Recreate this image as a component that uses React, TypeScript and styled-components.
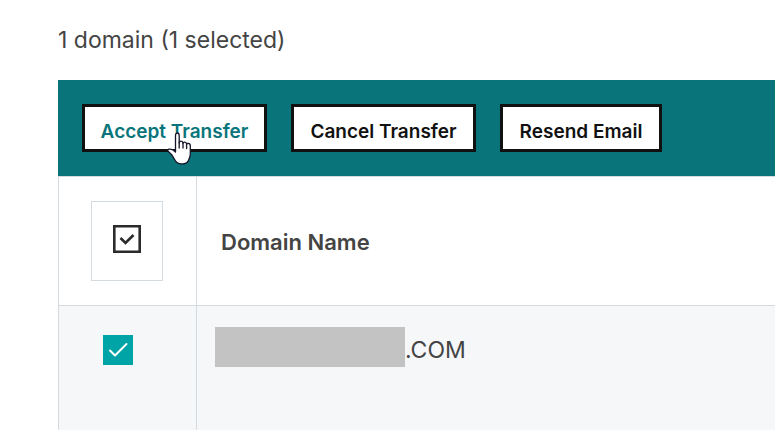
import React, { useState } from "react";
import styled, { createGlobalStyle } from "styled-components";

const GlobalStyle = createGlobalStyle`
  *, *::before, *::after { box-sizing: border-box; }
  body {
    margin: 0;
    background: #fff;
    color: #444;
    font-family: Inter, "Liberation Sans", sans-serif;
  }
`;

const Page = styled.main`
  height: 100vh;
  overflow: hidden;
  padding: 24px 0 0 58px;
`;

const Summary = styled.p`
  margin: 0 0 24px;
  font-size: 23px;
  font-weight: 400;
  line-height: 32px;
`;

const Toolbar = styled.div`
  display: flex;
  gap: 24px;
  padding: 24px;
  background: #09757a;
`;

const ActionSlot = styled.div`
  position: relative;
  flex: none;
`;

const ActionButton = styled.button<{ $active?: boolean; $width: number }>`
  display: block;
  width: ${(p) => p.$width}px;
  height: 48px;
  padding: 8px 0 0;
  border: 3px solid #111;
  border-radius: 0;
  background: #fff;
  color: ${(p) => (p.$active ? "#09757a" : "#111")};
  font: 600 19px/24px Inter, "Liberation Sans", sans-serif;
  white-space: nowrap;
  cursor: pointer;
`;

const Pointer = styled.svg`
  position: absolute;
  left: 85px;
  top: 28px;
  width: 25px;
  height: 34px;
  pointer-events: none;
`;

const Table = styled.table`
  width: 100%;
  table-layout: fixed;
  border-collapse: separate;
  border-spacing: 0;
  border-top: 1px solid #d4dbe0;
  border-left: 1px solid #d4dbe0;
  text-align: left;
`;

const SelectHeader = styled.th`
  width: 138px;
  padding: 24px 32px;
  border-right: 1px solid #d4dbe0;
  border-bottom: 1px solid #d4dbe0;
`;

const NameHeader = styled.th`
  padding: 2px 24px 0;
  border-bottom: 1px solid #d4dbe0;
  font-size: 22px;
  font-weight: 600;
  line-height: 32px;
`;

const SelectAllButton = styled.button`
  display: flex;
  align-items: center;
  justify-content: center;
  width: 72px;
  height: 80px;
  padding: 0 0 4px;
  border: 1px solid #d4dbe0;
  background: #fff;
  cursor: pointer;
`;

const DomainRow = styled.tr`
  height: 144px;
  background: #f5f7f9;
  vertical-align: top;
`;

const SelectCell = styled.td`
  padding: 29px 44px;
  border-right: 1px solid #d4dbe0;
`;

const CheckLabel = styled.label`
  display: grid;
  width: 30px;
  height: 30px;

  > * { grid-area: 1 / 1; }
`;

const CheckInput = styled.input`
  appearance: none;
  width: 30px;
  height: 30px;
  margin: 0;
  border: 1px solid #00a4a6;
  background: #fff;

  &:checked { background: #00a4a6; }
`;

const CheckMark = styled.svg`
  width: 30px;
  height: 30px;
  pointer-events: none;
`;

const NameCell = styled.td`
  padding: 21px 18px;
`;

const DomainName = styled.div`
  display: flex;
  align-items: flex-start;
  font-size: 23px;
  font-weight: 400;
  line-height: 46px;
`;

const Redaction = styled.span`
  width: 190px;
  height: 40px;
  background: #c3c3c3;
`;

const actions = [
  { label: "Accept Transfer", width: 185, active: true },
  { label: "Cancel Transfer", width: 185, active: false },
  { label: "Resend Email", width: 162, active: false },
];

export default function App() {
  const [checked, setChecked] = useState(true);

  return (
    <Page>
      <GlobalStyle />
      <Summary>1 domain (1 selected)</Summary>
      <Toolbar role="toolbar" aria-label="Domain transfers">
        {actions.map((action) => (
          <ActionSlot key={action.label}>
            <ActionButton type="button" $active={action.active} $width={action.width}>
              {action.label}
            </ActionButton>
            {action.active && (
              <Pointer viewBox="0 0 25 34" aria-hidden="true">
                <path
                  d="M8.5 19V3.8C8.5 1.8 9.3 1 10.3 1s1.9.8 1.9 2.8v7.1c.2-1.2 1-1.7 1.9-1.7 1.1 0 1.8.7 1.9 2 .3-.8.9-1.1 1.7-1.1 1.1 0 1.8.7 1.9 2 .3-.6.8-.8 1.5-.8 1.3 0 2.2.9 2.2 2.5V22c0 2.4-.8 4.1-1.5 5.8-.9 2.4-2.8 4-5.6 4h-2.1c-2.7 0-4.6-1.4-6-3.5L4.7 22.7 1.3 19.6C.4 18.7.8 17.4 2 17.2c2.3-.4 4.6.5 6.5 2.8z"
                  fill="#fff"
                  stroke="#15152a"
                  strokeWidth="1.3"
                  strokeLinejoin="round"
                />
                <path
                  d="M12.2 10.5v5.5M16 11v5M19.6 12v4.5"
                  fill="none"
                  stroke="#15152a"
                  strokeWidth="1.3"
                  strokeLinecap="round"
                />
              </Pointer>
            )}
          </ActionSlot>
        ))}
      </Toolbar>
      <Table>
        <thead>
          <tr>
            <SelectHeader scope="col">
              <SelectAllButton
                type="button"
                aria-label="Select all domains"
                onClick={() => setChecked(!checked)}
              >
                <svg width="28" height="28" viewBox="0 0 28 28" fill="none" stroke="#2b2b2b" aria-hidden="true">
                  <path d="M1.3 1.3h25.4v25.4H1.3z" strokeWidth="2.6" />
                  <path d="m7.5 13 5 5 8-8" strokeWidth="2.6" />
                </svg>
              </SelectAllButton>
            </SelectHeader>
            <NameHeader scope="col">Domain Name</NameHeader>
          </tr>
        </thead>
        <tbody>
          <DomainRow>
            <SelectCell>
              <CheckLabel>
                <CheckInput
                  type="checkbox"
                  aria-label="Select domain"
                  checked={checked}
                  onChange={(e) => setChecked(e.target.checked)}
                />
                <CheckMark viewBox="0 0 30 30" aria-hidden="true">
                  <path
                    d="m7 15.5 5 5L23.5 9"
                    fill="none"
                    stroke="#fff"
                    strokeWidth="2"
                    strokeLinecap="round"
                    strokeLinejoin="round"
                  />
                </CheckMark>
              </CheckLabel>
            </SelectCell>
            <NameCell>
              <DomainName>
                <Redaction />
                <span>.COM</span>
              </DomainName>
            </NameCell>
          </DomainRow>
        </tbody>
      </Table>
    </Page>
  );
}
